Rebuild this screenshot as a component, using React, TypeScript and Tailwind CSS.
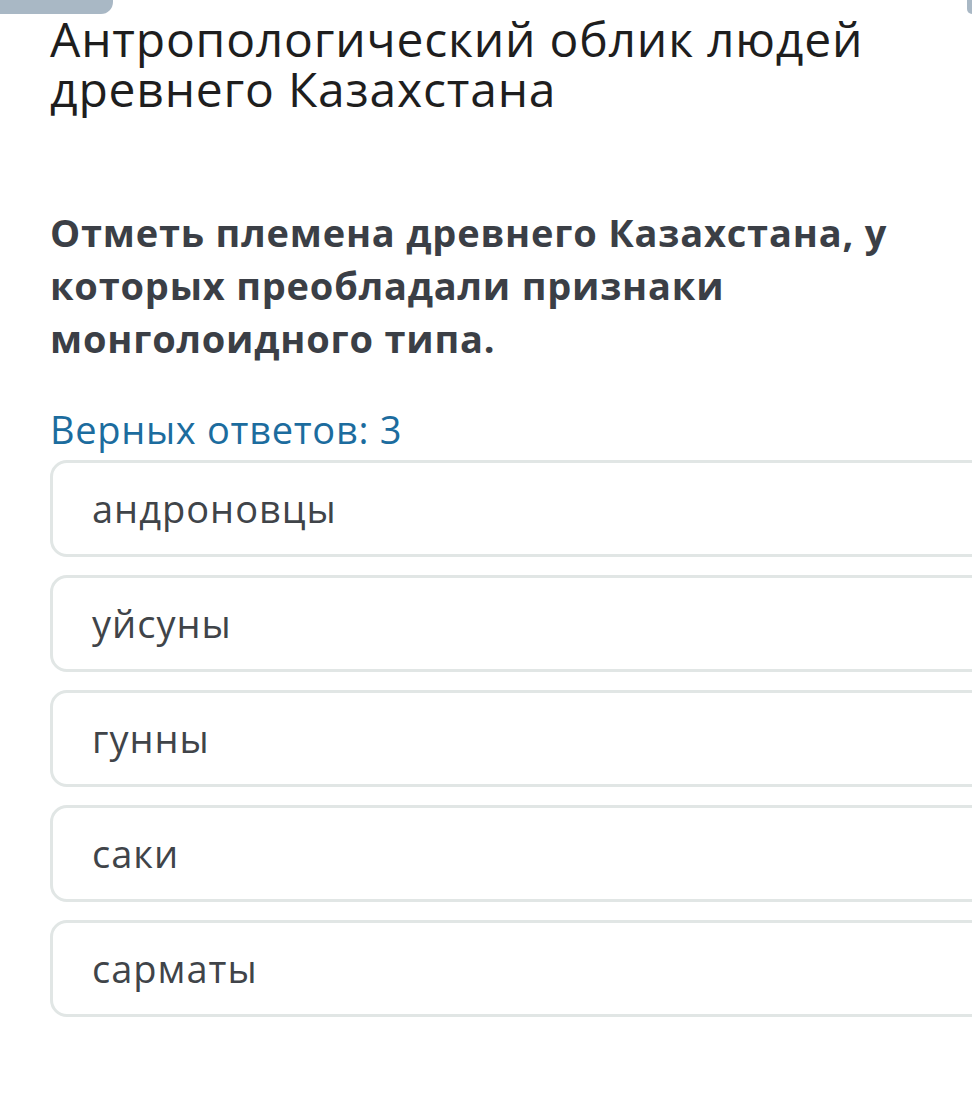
const options = ["андроновцы", "уйсуны", "гунны", "саки", "сарматы"];

export default function App() {
  return (
    <div className="relative h-[1107px] w-[972px] overflow-hidden bg-white font-['Open_Sans',sans-serif]">
      <div className="flex justify-between">
        <div className="h-[14px] w-[113px] rounded-br-[12px] bg-[#a9b8c5]" />
        <div className="h-[14px] w-[5px] rounded-bl-[6px] bg-[#a9b8c5]" />
      </div>
      <div className="pl-[50px]">
        <h1 className="text-[48px]/[50px] tracking-[0.8px] text-[#1e1e1e]">
          Антропологический облик людей
          <br />
          древнего Казахстана
        </h1>
        <p className="mt-[92px] w-[900px] text-[38px]/[53px] font-bold tracking-[0.8px] text-[#3b3f46]">
          Отметь племена древнего Казахстана, у
          <br />
          которых преобладали признаки
          <br />
          монголоидного типа.
        </p>
        <div className="mt-[39px] text-[38px]/[50px] tracking-[0.7px] text-[#1c6c9e]">
          Верных ответов: 3
        </div>
        <div className="mt-[6px] flex w-[960px] flex-col gap-[18px]">
          {options.map((o) => (
            <div
              key={o}
              className="flex h-[97px] items-center rounded-[17px] border-[3px] border-[#e1e6e5] pl-[39px] text-[38px] tracking-[1px] text-[#404449]"
            >
              {o}
            </div>
          ))}
        </div>
      </div>
    </div>
  );
}
